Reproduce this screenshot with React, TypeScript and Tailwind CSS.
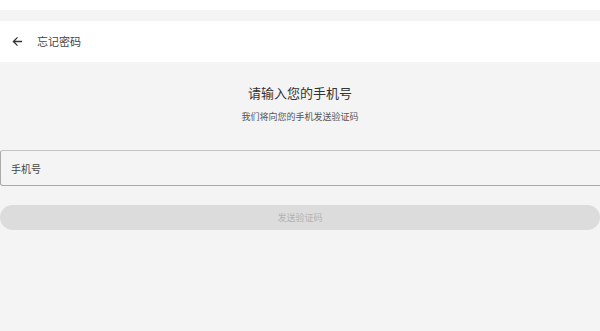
import React from "react";

export default function App() {
  return (
    <div
      className="w-[600px] h-[331px] bg-[#f4f4f4] overflow-hidden flex flex-col"
      style={{ fontFamily: '"Noto Sans CJK SC", "Noto Sans", sans-serif' }}
    >
      <div className="h-[10px] bg-white" />
      <div className="h-[11px]" />
      <div className="h-[41px] bg-white flex items-center pl-[12px]">
        <svg width="11" height="11" viewBox="0 0 11 11" className="text-[#333]">
          <path d="M10 5.5H1.6M5.5 1.4L1.4 5.5L5.5 9.6" fill="none" stroke="currentColor" strokeWidth="1.3" />
        </svg>
        <span className="ml-[14px] text-[11px] leading-none text-[#444]">忘记密码</span>
      </div>
      <div className="flex flex-col items-center pt-[23px]">
        <div className="text-[13px] leading-[16px] text-[#333]">请输入您的手机号</div>
        <div className="mt-[10px] text-[9px] leading-[12px] text-[#555]">我们将向您的手机发送验证码</div>
      </div>
      <div className="mt-[27px] h-[36px] w-[610px] border border-[#aaa] border-t-[#c4c4c4] rounded-[3px] flex items-center pl-[10px]">
        <span className="text-[10px] text-[#444]">手机号</span>
      </div>
      <div className="mt-[19px] h-[25px] w-[600px] rounded-full bg-[#dcdcdc] flex items-center justify-center">
        <span className="text-[9px] text-[#b2b2b2]">发送验证码</span>
      </div>
    </div>
  );
}
